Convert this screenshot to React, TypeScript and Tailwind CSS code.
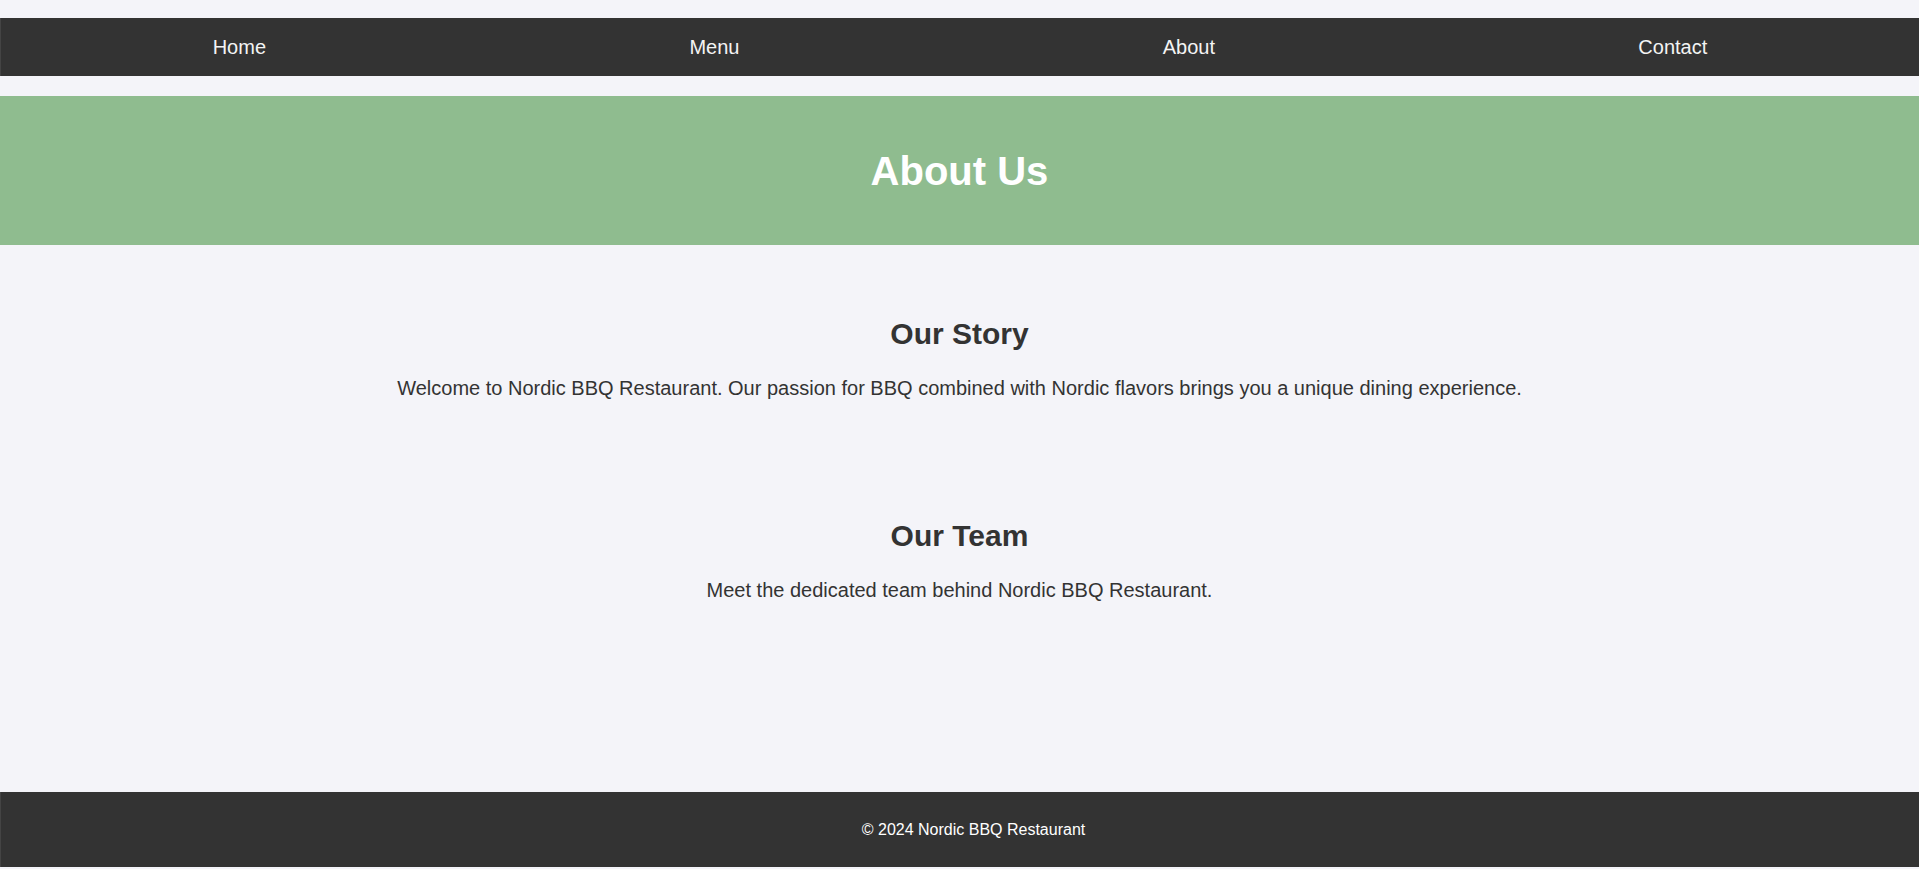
import React from 'react';

const links = ['Home', 'Menu', 'About', 'Contact'];

const sections = [
  {
    title: 'Our Story',
    text: 'Welcome to Nordic BBQ Restaurant. Our passion for BBQ combined with Nordic flavors brings you a unique dining experience.',
  },
  {
    title: 'Our Team',
    text: 'Meet the dedicated team behind Nordic BBQ Restaurant.',
  },
];

const App: React.FC = () => {
  return (
    <div className="min-h-screen flex flex-col bg-[#f4f4f9] text-[#333] font-['Liberation_Sans',Arial,sans-serif]">
      <nav className="mt-[18px] h-[58px] bg-[#333] flex items-center justify-around border-l border-[#444]">
        {links.map((l) => (
          <a key={l} href="#" className="text-[20px] text-[#f4f4f4]">
            {l}
          </a>
        ))}
      </nav>

      <header className="mt-[20px] h-[149px] bg-[#8fbc8f] flex items-center justify-center">
        <h1 className="text-[40px] font-bold text-white">About Us</h1>
      </header>

      <main className="flex-1 pt-[72px] text-center">
        {sections.map((s, i) => (
          <section key={s.title} className={i > 0 ? 'mt-[120px]' : ''}>
            <h2 className="text-[30px] leading-[34px] font-bold mb-[26px]">{s.title}</h2>
            <p className="text-[20px] leading-[22px]">{s.text}</p>
          </section>
        ))}
      </main>

      <footer className="h-[75px] mb-[2px] bg-[#333] flex items-center justify-center pl-[27px] border-l border-[#444]">
        <p className="text-[16px] text-white">© 2024 Nordic BBQ Restaurant</p>
      </footer>
    </div>
  );
};

export default App;
